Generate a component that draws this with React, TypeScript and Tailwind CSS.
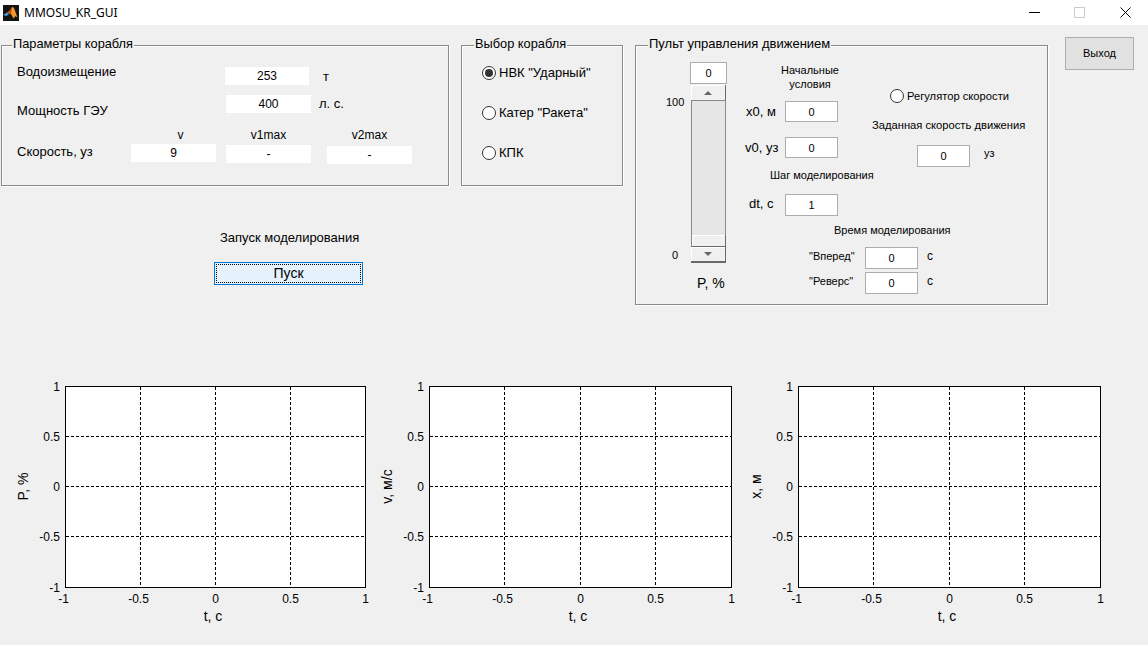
import React from "react";

const ff = "[font-family:'Liberation_Sans',Arial,sans-serif]";

function Field({ value, className }: { value: string; className: string }) {
  return (
    <input
      readOnly
      value={value}
      className={"block shrink-0 bg-white text-center text-black outline-none " + className}
    />
  );
}

function Radio({ on }: { on?: boolean }) {
  return (
    <span className="flex h-[14px] w-[14px] shrink-0 items-center justify-center rounded-full border border-[#333333] bg-white">
      {on && <span className="h-[8px] w-[8px] rounded-full bg-[#333333]" />}
    </span>
  );
}

function Panel({ title, className, legend, children }: { title: string; className: string; legend: string; children: React.ReactNode }) {
  return (
    <div className={"relative shrink-0 border border-[#8a8a8a] shadow-[1px_1px_0_#ffffff,inset_1px_1px_0_#ffffff] " + className}>
      <span className={"absolute -top-[10px] whitespace-nowrap bg-[#f0f0f0] px-[1px] leading-4 " + legend}>{title}</span>
      {children}
    </div>
  );
}

function Plot({ x0, w, label, className, svgW }: { x0: number; w: number; label: string; className: string; svgW: number }) {
  const top = 16;
  const h = 201;
  const xs = [0, 0.25, 0.5, 0.75, 1].map((f) => Math.floor(x0 + f * w));
  const ys = [0, 0.25, 0.5, 0.75, 1].map((f) => Math.floor(top + f * h));
  const xl = ["-1", "-0.5", "0", "0.5", "1"];
  const yl = ["1", "0.5", "0", "-0.5", "-1"];
  return (
    <svg width={svgW} height={260} className={"block shrink-0 " + className} fontFamily="'Liberation Sans', Arial, sans-serif" fontSize="12" fill="#000">
      <rect x={x0 + 0.5} y={top + 0.5} width={w} height={h} fill="#fff" stroke="#000" />
      {xs.slice(1, 4).map((x) => (
        <line key={x} x1={x + 0.5} x2={x + 0.5} y1={top + 1} y2={top + h} stroke="#000" strokeDasharray="3 2" />
      ))}
      {ys.slice(1, 4).map((y) => (
        <line key={y} x1={x0 + 1} x2={x0 + w} y1={y + 0.5} y2={y + 0.5} stroke="#000" strokeDasharray="3 2" />
      ))}
      {xs.map((x, i) => (
        <text key={i} x={xl[i].startsWith("-") ? x - 1.5 : x + 0.5} y={233} textAnchor="middle">{xl[i]}</text>
      ))}
      {ys.map((y, i) => (
        <text key={i} x={x0 - 5} y={y + 5} textAnchor="end">{yl[i]}</text>
      ))}
      <text x={x0 + w / 2 - 2} y={251} textAnchor="middle" fontSize="14">t, с</text>
      <text transform={`translate(${x0 - 37} ${top + h / 2}) rotate(-90)`} textAnchor="middle" fontSize="14">{label}</text>
    </svg>
  );
}

export default function App() {
  return (
    <div className={"flex h-[645px] w-[1148px] flex-col overflow-hidden bg-[#f0f0f0] text-black " + ff}>
      <div className="flex h-[25px] shrink-0 items-center bg-white">
        <svg width="16" height="16" viewBox="0 0 16 16" className="ml-[3px] shrink-0">
          <rect width="16" height="16" fill="#141414" />
          <path d="M0 10 L4 7.5 L6 9 L3.5 11 Z" fill="#3fa7d6" />
          <path d="M4 7.5 L7 5 L9 2 L10.5 2.5 L8 9 L6 9 Z" fill="#c9501c" />
          <path d="M9 2 L11 3 L14.5 12.5 L12.5 11 L10.5 13.5 L8 9 Z" fill="#f09a2b" />
        </svg>
        <span className="ml-[5px] whitespace-nowrap font-['Noto_Sans'] text-[12px] leading-4">MMOSU_KR_GUI</span>
        <svg width="11" height="1" className="ml-[911px] shrink-0"><rect width="11" height="1" fill="#000" /></svg>
        <svg width="11" height="11" className="ml-[34px] shrink-0"><rect x="0.5" y="0.5" width="10" height="10" fill="none" stroke="#cccccc" /></svg>
        <svg width="11" height="11" className="ml-[35px] shrink-0"><path d="M0.5 0.5 L10.5 10.5 M10.5 0.5 L0.5 10.5" stroke="#000" fill="none" /></svg>
      </div>

      <div className="flex h-[345px] shrink-0 items-start">
        <div className="ml-[1px] mt-[20px] flex w-[448px] shrink-0 flex-col">
          <Panel title="Параметры корабля" className="h-[141px] w-[448px]" legend="left-[10px] text-[12.8px]">
            <div className="mt-[21px] flex h-[18px] items-start text-[13px] leading-4">
              <span className="-mt-[3px] ml-[15px] w-[208px]">Водоизмещение</span>
              <Field value="253" className="h-[18px] w-[84px] text-[12px]" />
              <span className="ml-[14px] mt-[2px]">т</span>
            </div>
            <div className="mt-[10px] flex h-[18px] items-start text-[13px] leading-4">
              <span className="ml-[15px] mt-[8px] w-[209px]">Мощность ГЭУ</span>
              <Field value="400" className="h-[18px] w-[85px] text-[12px]" />
              <span className="ml-[8px] mt-[1px]">л. с.</span>
            </div>
            <div className="mt-[14px] flex h-4 text-[12px] leading-4">
              <span className="ml-[136px] w-[85px] text-center">v</span>
              <span className="ml-[3px] w-[85px] text-center">v1max</span>
              <span className="ml-[16px] w-[85px] text-center">v2max</span>
            </div>
            <div className="mt-[1px] flex h-[18px] items-start text-[13px] leading-4">
              <span className="ml-[15px] w-[114px]">Скорость, уз</span>
              <Field value="9" className="h-[18px] w-[85px] text-[12px]" />
              <Field value="-" className="ml-[10px] mt-[1px] h-[18px] w-[85px] text-[12px]" />
              <Field value="-" className="ml-[16px] mt-[2px] h-[18px] w-[85px] text-[12px]" />
            </div>
          </Panel>
          <span className="ml-[219px] mt-[44px] whitespace-nowrap text-[13px] leading-4">Запуск моделирования</span>
          <button className="ml-[213px] mt-[16px] h-[23px] w-[149px] border border-[#0078d7] bg-[#e5f1fb] p-[1px]">
            <span className="flex h-full w-full items-center justify-center border border-dotted border-black text-[14px]">Пуск</span>
          </button>
        </div>

        <Panel title="Выбор корабля" className="ml-[12px] mt-[20px] h-[141px] w-[162px]" legend="left-[12px] text-[12.8px]">
          <div className="flex flex-col gap-[24px] pl-[20px] pt-[19px] text-[13px] leading-4">
            <div className="flex h-4 items-center gap-[3px] whitespace-nowrap"><Radio on /><span>НВК "Ударный"</span></div>
            <div className="flex h-4 items-center gap-[3px] whitespace-nowrap"><Radio /><span>Катер "Ракета"</span></div>
            <div className="flex h-4 items-center gap-[3px] whitespace-nowrap"><Radio /><span>КПК</span></div>
          </div>
        </Panel>

        <Panel title="Пульт управления движением" className="ml-[12px] mt-[20px] flex h-[260px] w-[413px] items-start" legend="left-[12px] text-[13px]">
          <div className="flex w-[92px] shrink-0 flex-col">
            <Field value="0" className="ml-[54px] mt-[16px] h-[22px] w-[37px] border border-[#adadad] text-[11px]" />
            <div className="mt-[1px] flex h-[178px] items-start">
              <div className="ml-[30px] flex w-[18px] flex-col text-center text-[11px] leading-4">
                <span className="mt-[9px]">100</span>
                <span className="mt-[137px]">0</span>
              </div>
              <div className="ml-[7px] flex h-[178px] w-[35px] flex-col">
                <div className="flex h-[15px] items-center justify-center border-r border-[#696969] bg-[#f0f0f0] shadow-[inset_1px_1px_0_#ffffff]">
                  <span className="h-0 w-0 border-x-[4px] border-b-[4px] border-x-transparent border-b-[#666666]" />
                </div>
                <div className="flex-1 border-x border-t border-[#8a8a8a] bg-[#e6e6e6]" />
                <div className="h-[12px] border-x border-b border-[#696969] border-l-[#8a8a8a] bg-[#f0f0f0] shadow-[inset_1px_1px_0_#ffffff]" />
                <div className="flex h-[16px] items-center justify-center border-b-2 border-r border-[#696969] bg-[#f0f0f0] shadow-[inset_1px_1px_0_#ffffff]">
                  <span className="h-0 w-0 border-x-[4px] border-t-[4px] border-x-transparent border-t-[#666666]" />
                </div>
              </div>
            </div>
            <span className="ml-[61px] mt-[12px] whitespace-nowrap text-[14px] leading-4">P, %</span>
          </div>

          <div className="flex flex-col text-[11px] leading-4">
            <div className="flex items-start">
              <div className="flex w-[144px] shrink-0 flex-col">
                <div className="ml-[37px] mt-[17px] w-[90px] text-center leading-[14px]">Начальные<br />условия</div>
                <div className="mt-[10px] flex h-[21px] items-start">
                  <span className="ml-[18px] mt-[3px] w-[39px] text-[13px]">x0, м</span>
                  <Field value="0" className="h-[21px] w-[53px] border border-[#adadad] text-[11px]" />
                </div>
                <div className="mt-[15px] flex h-[21px] items-start">
                  <span className="ml-[17px] mt-[3px] w-[40px] text-[13px]">v0, уз</span>
                  <Field value="0" className="h-[21px] w-[53px] border border-[#adadad] text-[11px]" />
                </div>
                <span className="ml-[42px] mt-[9px] whitespace-nowrap">Шаг моделирования</span>
                <div className="mt-[11px] flex h-[22px] items-start">
                  <span className="ml-[21px] mt-[2px] w-[36px] text-[13px]">dt, с</span>
                  <Field value="1" className="h-[22px] w-[53px] border border-[#adadad] text-[11px]" />
                </div>
              </div>
              <div className="flex flex-col">
                <div className="ml-[18px] mt-[43px] flex h-[14px] items-center gap-[3px] whitespace-nowrap text-[11.2px]"><Radio /><span>Регулятор скорости</span></div>
                <span className="mt-[14px] whitespace-nowrap text-[11.2px]">Заданная скорость движения</span>
                <div className="mt-[12px] flex h-[22px] items-start">
                  <Field value="0" className="ml-[45px] h-[22px] w-[53px] border border-[#adadad] text-[11px]" />
                  <span className="ml-[14px]">уз</span>
                </div>
              </div>
            </div>
            <span className="ml-[106px] mt-[6px] whitespace-nowrap">Время моделирования</span>
            <div className="mt-[9px] flex h-[22px] items-start">
              <span className="ml-[81px] mt-[1px] w-[56px] whitespace-nowrap">"Вперед"</span>
              <Field value="0" className="h-[22px] w-[53px] border border-[#adadad] text-[11px]" />
              <span className="ml-[9px] mt-[1px] text-[12px]">с</span>
            </div>
            <div className="mt-[3px] flex h-[22px] items-start">
              <span className="ml-[81px] mt-[1px] w-[56px] whitespace-nowrap">"Реверс"</span>
              <Field value="0" className="h-[22px] w-[53px] border border-[#adadad] text-[11px]" />
              <span className="ml-[9px] mt-[1px] text-[12px]">с</span>
            </div>
          </div>
        </Panel>

        <button className="ml-[17px] mt-[12px] h-[33px] w-[69px] shrink-0 border border-[#adadad] bg-[#e1e1e1] text-[11px]">Выход</button>
      </div>

      <div className="flex shrink-0">
        <Plot x0={50} w={300} label="P, %" className="ml-[15px]" svgW={355} />
        <Plot x0={59} w={302} label="v, м/с" className="" svgW={370} />
        <Plot x0={58} w={302} label="x, м" className="" svgW={380} />
      </div>
    </div>
  );
}
